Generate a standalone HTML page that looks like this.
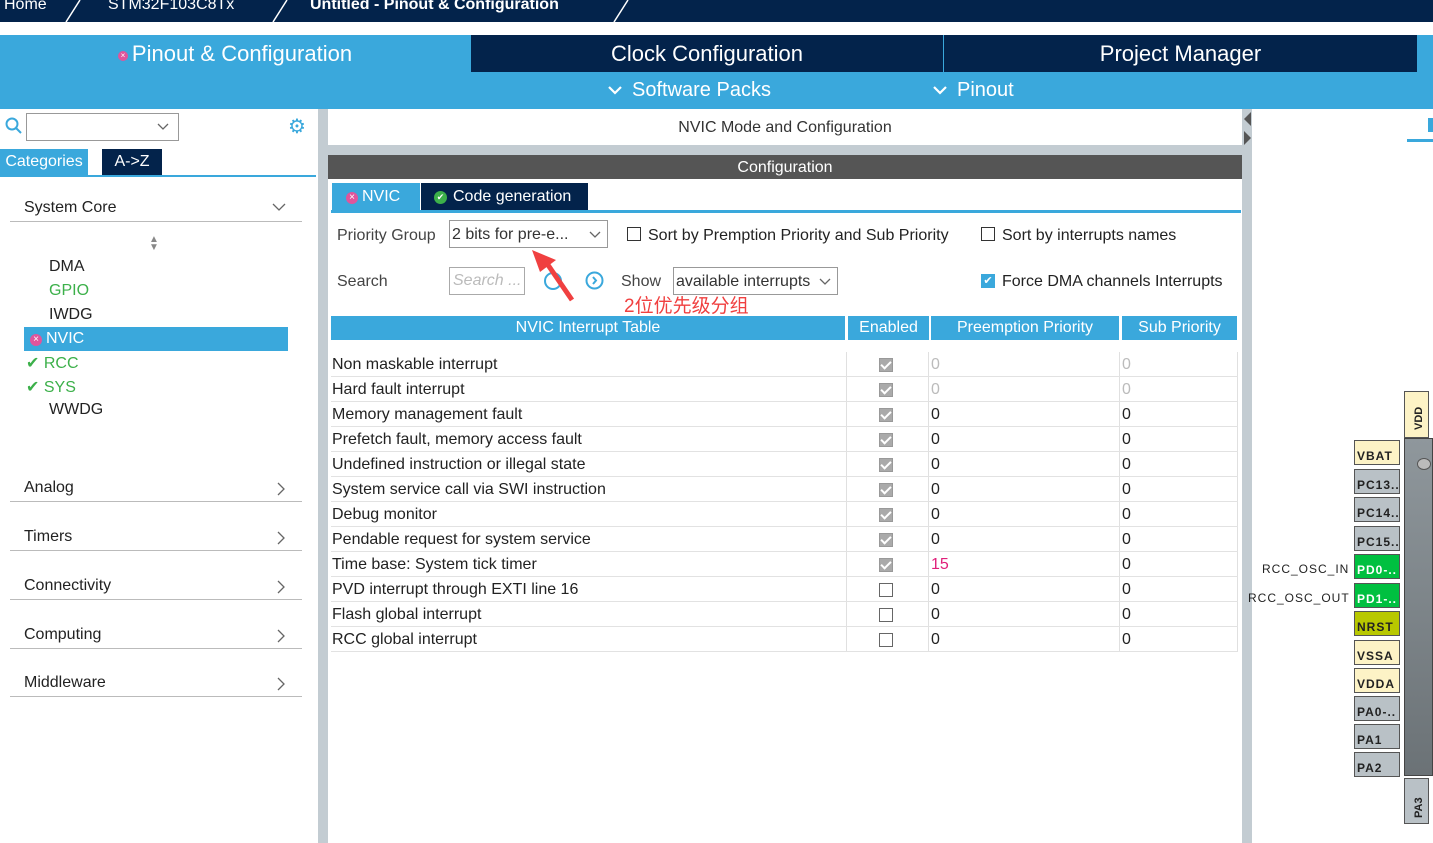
<!DOCTYPE html>
<html><head><meta charset="utf-8"><style>
*{margin:0;padding:0;box-sizing:border-box}
body{width:1433px;height:843px;overflow:hidden;background:#fff;font-family:"Liberation Sans","Noto Sans CJK SC",sans-serif;position:relative;color:#222}
.a{position:absolute}
.top{left:0;top:0;width:1433px;height:22px;background:#03234b;color:#fff;font-size:16px}
.tabrow{top:35px;left:0;width:1433px;height:74px;background:#3aa8dc}
.t{top:35px;height:37px;color:#fff;font-size:22px;text-align:center;line-height:37px}
.lefttxt{font-size:16px}
.cat{left:10px;width:292px;height:28px;border-bottom:1px solid #bbb;font-size:16px;padding-left:14px;line-height:28px}
.cat svg{position:absolute;right:16px;top:8px}
.row{left:331px;width:907px;height:25px;border-bottom:1px solid #e2e2e2;font-size:16px;line-height:26px}
.row .n{position:absolute;left:1px}
.row .c{position:absolute;left:548px;top:6px;width:14px;height:14px;border:1px solid #666;background:#fff}
.row .c.on{background:#aaa;border-color:#999}
.row .c.on:after{content:"";position:absolute;left:3px;top:0px;width:4px;height:8px;border:solid #fff;border-width:0 2px 2px 0;transform:rotate(45deg)}
.row .p{position:absolute;left:600px}
.row .s{position:absolute;left:791px}
.vl{top:352px;width:1px;height:300px;background:#e0e0e0}
.pin{left:1354px;width:46px;height:25px;border:1px solid #555;font-size:12px;font-weight:bold;line-height:30px;padding-left:2px;letter-spacing:1px;background:#b9c1c6}
.x{display:inline-block;width:12px;height:12px;border-radius:50%;background:#e0559c;color:#fff;font-size:10px;line-height:12px;text-align:center;vertical-align:1px;margin-right:4px}
.ok{display:inline-block;width:13px;height:13px;border-radius:50%;background:#3cb04a;color:#fff;font-size:9px;line-height:13px;text-align:center;vertical-align:1px;margin-right:6px}
</style></head><body>
<div class="a top"><span class="a" style="left:4px;top:-4px">Home</span><span class="a" style="left:108px;top:-4px">STM32F103C8Tx</span><span class="a" style="left:310px;top:-4px;font-weight:bold">Untitled - Pinout &amp; Configuration</span>
<svg class="a" style="left:0;top:0" width="640" height="22"><g stroke="#fff" stroke-width="1.5" fill="none"><path d="M80 0 L66 22"/><path d="M287 0 L273 22"/><path d="M628 0 L614 22"/></g></svg></div>
<div class="a tabrow"></div>
<div class="a t" style="left:0;width:470px"><span class="x" style="width:10px;height:10px;font-size:8px;line-height:10px;vertical-align:3px">×</span>Pinout &amp; Configuration</div>
<div class="a t" style="left:471px;width:472px;background:#03234b">Clock Configuration</div>
<div class="a t" style="left:944px;width:473px;background:#03234b">Project Manager</div>
<svg class="a" style="left:607px;top:85px" width="16" height="10"><path d="M2 2 L8 8 L14 2" stroke="#fff" stroke-width="2.2" fill="none"/></svg>
<div class="a" style="left:632px;top:79px;color:#fff;font-size:20px">Software Packs</div>
<svg class="a" style="left:932px;top:85px" width="16" height="10"><path d="M2 2 L8 8 L14 2" stroke="#fff" stroke-width="2.2" fill="none"/></svg>
<div class="a" style="left:957px;top:79px;color:#fff;font-size:20px">Pinout</div>
<!-- left panel -->
<div class="a" style="left:318px;top:109px;width:10px;height:734px;background:#c3ccd2"></div>
<svg class="a" style="left:5px;top:117px" width="18" height="18"><circle cx="7" cy="7" r="5.5" stroke="#3aa8dc" stroke-width="2" fill="none"/><path d="M11 11 L16 16" stroke="#3aa8dc" stroke-width="2"/></svg>
<div class="a" style="left:26px;top:113px;width:153px;height:28px;border:1px solid #999"></div>
<svg class="a" style="left:157px;top:123px" width="12" height="8"><path d="M1 1 L6 6 L11 1" stroke="#666" stroke-width="1.3" fill="none"/></svg>
<div class="a" style="left:288px;top:114px;color:#3aa8dc;font-size:20px">⚙</div>
<div class="a" style="left:0;top:149px;width:88px;height:26px;background:#3aa8dc;color:#fff;font-size:16px;line-height:25px;text-align:center">Categories</div>
<div class="a" style="left:102px;top:149px;width:60px;height:26px;background:#03234b;color:#fff;font-size:16px;line-height:25px;text-align:center">A-&gt;Z</div>
<div class="a" style="left:0;top:175px;width:316px;height:2px;background:#3aa8dc"></div>
<div class="a cat" style="top:194px">System Core<svg width="14" height="10"><path d="M1 2 L7 8 L13 2" stroke="#666" stroke-width="1.3" fill="none"/></svg></div>
<div class="a" style="left:149px;top:236px;color:#888;font-size:10px;line-height:8px">▲<br>▼</div>
<div class="a lefttxt" style="left:49px;top:258px">DMA</div>
<div class="a lefttxt" style="left:49px;top:282px;color:#3cb04a">GPIO</div>
<div class="a lefttxt" style="left:49px;top:306px">IWDG</div>
<div class="a" style="left:24px;top:327px;width:264px;height:24px;background:#3aa8dc"></div>
<div class="a lefttxt" style="left:30px;top:330px;color:#fff"><span class="x">×</span>NVIC</div>
<div class="a lefttxt" style="left:26px;top:353px;color:#3cb04a">✔ RCC</div>
<div class="a lefttxt" style="left:26px;top:377px;color:#3cb04a">✔ SYS</div>
<div class="a lefttxt" style="left:49px;top:401px">WWDG</div>
<div class="a cat" style="top:474px">Analog<svg width="10" height="14"><path d="M2 1 L8 7 L2 13" stroke="#666" stroke-width="1.3" fill="none"/></svg></div>
<div class="a cat" style="top:523px">Timers<svg width="10" height="14"><path d="M2 1 L8 7 L2 13" stroke="#666" stroke-width="1.3" fill="none"/></svg></div>
<div class="a cat" style="top:572px">Connectivity<svg width="10" height="14"><path d="M2 1 L8 7 L2 13" stroke="#666" stroke-width="1.3" fill="none"/></svg></div>
<div class="a cat" style="top:621px">Computing<svg width="10" height="14"><path d="M2 1 L8 7 L2 13" stroke="#666" stroke-width="1.3" fill="none"/></svg></div>
<div class="a cat" style="top:669px">Middleware<svg width="10" height="14"><path d="M2 1 L8 7 L2 13" stroke="#666" stroke-width="1.3" fill="none"/></svg></div>
<!-- middle -->
<div class="a" style="left:328px;top:109px;width:914px;height:38px;text-align:center;font-size:16px;line-height:38px;color:#333">NVIC Mode and Configuration</div>
<div class="a" style="left:328px;top:145px;width:914px;height:10px;background:#c3ccd2"></div>
<div class="a" style="left:328px;top:155px;width:914px;height:24px;background:#555;color:#fff;text-align:center;font-size:16px;line-height:26px">Configuration</div>
<div class="a" style="left:332px;top:183px;width:88px;height:27px;background:#3aa8dc;color:#fff;font-size:16px;line-height:27px;padding-left:14px"><span class="x">×</span>NVIC</div>
<div class="a" style="left:421px;top:183px;width:167px;height:27px;background:#03234b;color:#fff;font-size:16px;line-height:27px;padding-left:13px"><span class="ok">✔</span>Code generation</div>
<div class="a" style="left:331px;top:210px;width:910px;height:3px;background:#3aa8dc"></div>
<div class="a" style="left:337px;top:227px;font-size:16px;color:#444">Priority Group</div>
<div class="a" style="left:449px;top:220px;width:159px;height:28px;border:1px solid #999;font-size:16px;line-height:28px;padding-left:2px;color:#333">2 bits for pre-e...<svg class="a" style="right:6px;top:10px" width="12" height="8"><path d="M1 1 L6 6 L11 1" stroke="#666" stroke-width="1.3" fill="none"/></svg></div>
<div class="a" style="left:627px;top:227px;width:14px;height:14px;border:1px solid #333"></div>
<div class="a" style="left:648px;top:227px;font-size:16px">Sort by Premption Priority and Sub Priority</div>
<div class="a" style="left:981px;top:227px;width:14px;height:14px;border:1px solid #333"></div>
<div class="a" style="left:1002px;top:227px;font-size:16px">Sort by interrupts names</div>
<div class="a" style="left:337px;top:273px;font-size:16px;color:#444">Search</div>
<div class="a" style="left:449px;top:267px;width:76px;height:28px;border:1px solid #aaa;font-size:16px;line-height:26px;padding-left:3px;color:#bbb;font-style:italic">Search ...</div>
<div class="a" style="left:544px;top:272px;width:18px;height:18px;border:2px solid #3aa8dc;border-radius:50%"></div>
<svg class="a" style="left:585px;top:271px" width="19" height="19"><circle cx="9.5" cy="9.5" r="8" stroke="#3aa8dc" stroke-width="2" fill="none"/><path d="M8 6 L11 9.5 L8 13" stroke="#3aa8dc" stroke-width="2" fill="none"/></svg>
<div class="a" style="left:621px;top:273px;font-size:16px;color:#444">Show</div>
<div class="a" style="left:673px;top:267px;width:165px;height:28px;border:1px solid #999;font-size:16px;line-height:28px;padding-left:2px;color:#333">available interrupts<svg class="a" style="right:6px;top:10px" width="12" height="8"><path d="M1 1 L6 6 L11 1" stroke="#666" stroke-width="1.3" fill="none"/></svg></div>
<div class="a" style="left:981px;top:274px;width:14px;height:14px;background:#3aa8dc;color:#fff;font-size:11px;line-height:14px;text-align:center">✔</div>
<div class="a" style="left:1002px;top:273px;font-size:16px">Force DMA channels Interrupts</div>
<svg class="a" style="left:528px;top:248px" width="50" height="56"><path d="M44 52 L18 14" stroke="#f04040" stroke-width="5"/><path d="M4 2 L28 12 L12 24 Z" fill="#f04040"/></svg>
<div class="a" style="left:331px;top:316px;width:514px;height:24px;background:#3aa8dc;color:#fff;text-align:center;font-size:16px;line-height:24px">NVIC Interrupt Table</div>
<div class="a" style="left:624px;top:294px;font-size:19px;line-height:26px;color:#f04040;z-index:2">2位优先级分组</div>
<div class="a" style="left:848px;top:316px;width:81px;height:24px;background:#3aa8dc;color:#fff;text-align:center;font-size:16px;line-height:24px">Enabled</div>
<div class="a" style="left:931px;top:316px;width:188px;height:24px;background:#3aa8dc;color:#fff;text-align:center;font-size:16px;line-height:24px">Preemption Priority</div>
<div class="a" style="left:1122px;top:316px;width:115px;height:24px;background:#3aa8dc;color:#fff;text-align:center;font-size:16px;line-height:24px">Sub Priority</div>
<div class="a vl" style="left:846px"></div><div class="a vl" style="left:928px"></div><div class="a vl" style="left:1119px"></div><div class="a vl" style="left:1237px"></div>
<div class="a row" style="top:352px"><span class="n">Non maskable interrupt</span><span class="c on"></span><span class="p" style="color:#bbb">0</span><span class="s" style="color:#bbb">0</span></div>
<div class="a row" style="top:377px"><span class="n">Hard fault interrupt</span><span class="c on"></span><span class="p" style="color:#bbb">0</span><span class="s" style="color:#bbb">0</span></div>
<div class="a row" style="top:402px"><span class="n">Memory management fault</span><span class="c on"></span><span class="p">0</span><span class="s">0</span></div>
<div class="a row" style="top:427px"><span class="n">Prefetch fault, memory access fault</span><span class="c on"></span><span class="p">0</span><span class="s">0</span></div>
<div class="a row" style="top:452px"><span class="n">Undefined instruction or illegal state</span><span class="c on"></span><span class="p">0</span><span class="s">0</span></div>
<div class="a row" style="top:477px"><span class="n">System service call via SWI instruction</span><span class="c on"></span><span class="p">0</span><span class="s">0</span></div>
<div class="a row" style="top:502px"><span class="n">Debug monitor</span><span class="c on"></span><span class="p">0</span><span class="s">0</span></div>
<div class="a row" style="top:527px"><span class="n">Pendable request for system service</span><span class="c on"></span><span class="p">0</span><span class="s">0</span></div>
<div class="a row" style="top:552px"><span class="n">Time base: System tick timer</span><span class="c on"></span><span class="p" style="color:#e0207a">15</span><span class="s">0</span></div>
<div class="a row" style="top:577px"><span class="n">PVD interrupt through EXTI line 16</span><span class="c"></span><span class="p">0</span><span class="s">0</span></div>
<div class="a row" style="top:602px"><span class="n">Flash global interrupt</span><span class="c"></span><span class="p">0</span><span class="s">0</span></div>
<div class="a row" style="top:627px"><span class="n">RCC global interrupt</span><span class="c"></span><span class="p">0</span><span class="s">0</span></div>
<!-- right -->
<div class="a" style="left:1242px;top:109px;width:10px;height:734px;background:#c3ccd2"></div>
<svg class="a" style="left:1243px;top:111px" width="9" height="36"><path d="M8 1 L1 8 L8 15Z" fill="#555"/><path d="M1 20 L8 27 L1 34Z" fill="#555"/></svg>
<div class="a" style="left:1407px;top:139px;width:26px;height:3px;background:#3aa8dc"></div>
<div class="a" style="left:1428px;top:118px;width:5px;height:14px;background:#3aa8dc"></div>
<div class="a" style="left:1404px;top:391px;width:25px;height:47px;border:1px solid #555;background:#fdf3c6"></div>
<div class="a" style="left:1413px;top:430px;transform:rotate(-90deg);transform-origin:0 0;font-size:11px;font-weight:bold">VDD</div>
<div class="a" style="left:1404px;top:438px;width:29px;height:338px;background:linear-gradient(#8f979c,#6b7276);border:1px solid #444"></div>
<div class="a" style="left:1417px;top:458px;width:14px;height:12px;border:1px solid #555;border-radius:50%;background:#bbb"></div>
<div class="a pin" style="top:440px;background:#fdf3c6">VBAT</div>
<div class="a pin" style="top:469px">PC13..</div>
<div class="a pin" style="top:497px">PC14..</div>
<div class="a pin" style="top:526px">PC15..</div>
<div class="a pin" style="top:554px;background:#00c040;color:#fff">PD0-..</div>
<div class="a pin" style="top:583px;background:#00c040;color:#fff">PD1-..</div>
<div class="a pin" style="top:611px;background:#b8c800">NRST</div>
<div class="a pin" style="top:640px;background:#fdf3c6">VSSA</div>
<div class="a pin" style="top:668px;background:#fdf3c6">VDDA</div>
<div class="a pin" style="top:696px">PA0-..</div>
<div class="a pin" style="top:724px">PA1</div>
<div class="a pin" style="top:752px">PA2</div>
<div class="a" style="left:1404px;top:778px;width:25px;height:46px;border:1px solid #555;background:#b9c1c6"></div>
<div class="a" style="left:1413px;top:818px;transform:rotate(-90deg);transform-origin:0 0;font-size:11px;font-weight:bold">PA3</div>
<div class="a" style="left:1262px;top:562px;font-size:12px;letter-spacing:1px">RCC_OSC_IN</div>
<div class="a" style="left:1248px;top:591px;font-size:12px;letter-spacing:1px">RCC_OSC_OUT</div>
</body></html>
